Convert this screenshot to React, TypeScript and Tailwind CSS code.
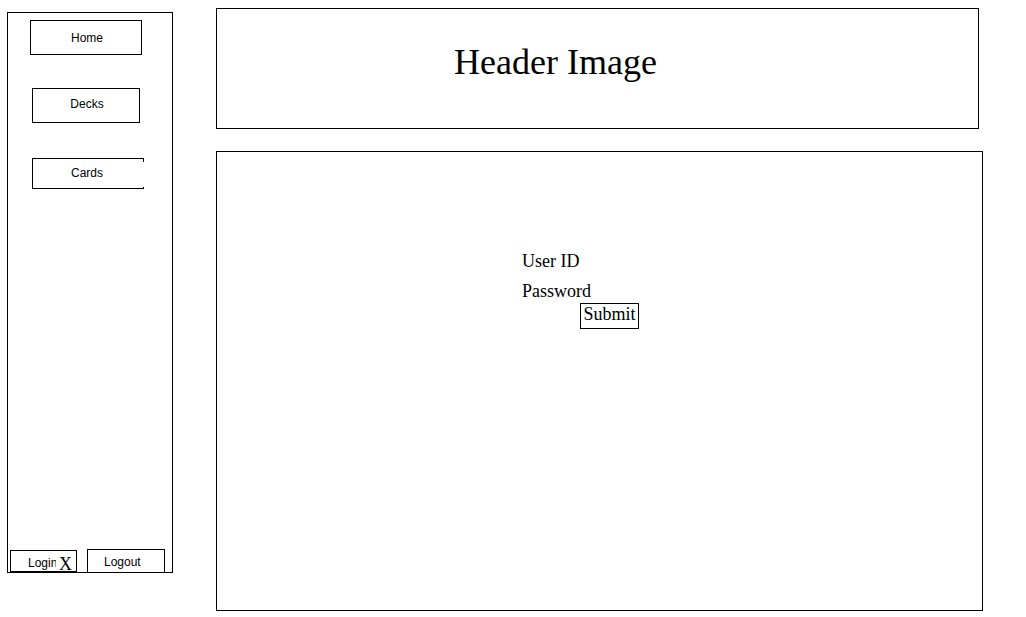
import React from "react";

const navButton =
  "relative flex h-[35px] items-center justify-center border border-black font-['Liberation_Sans',sans-serif] text-xs";

function Sidebar() {
  return (
    <aside className="flex min-h-[561px] w-[166px] shrink-0 flex-col justify-between border border-black">
      <nav className="flex flex-col items-start pt-[7px]">
        <button type="button" className={`${navButton} ml-[22px] w-[112px] pl-0.5`}>
          Home
        </button>
        <button type="button" className={`${navButton} mt-[33px] ml-6 w-[108px] pb-1 pl-0.5`}>
          Decks
        </button>
        <button
          type="button"
          className="relative mt-[35px] ml-6 flex h-[31px] w-[112px] items-center justify-center border border-black pr-0.5 pb-0.5 font-['Liberation_Sans',sans-serif] text-xs"
        >
          Cards
          <span className="absolute top-[3px] -right-px bottom-px w-px bg-white" />
        </button>
      </nav>
      <div className="flex items-end gap-2.5 pl-0.5">
        <button
          type="button"
          className="relative flex h-[22px] w-[67px] items-center border border-black pt-1 pl-[17px] font-['Liberation_Sans',sans-serif] text-xs"
        >
          Login
          <span className="absolute top-[3px] right-px bottom-0 w-[19px] bg-white text-center font-['Liberation_Serif',serif] text-lg leading-5">
            X
          </span>
        </button>
        <button
          type="button"
          className="flex h-[23px] w-[78px] items-center border border-b-0 border-black pt-0.5 pl-4 font-['Liberation_Sans',sans-serif] text-xs"
        >
          Logout
        </button>
      </div>
    </aside>
  );
}

function LoginForm() {
  return (
    <form
      className="mx-auto w-[155px] text-lg leading-6"
      onSubmit={(event) => event.preventDefault()}
    >
      <div className="mb-1.5 flex gap-2">
        <label htmlFor="user-id" className="whitespace-nowrap">
          User ID
        </label>
        <input id="user-id" type="text" className="h-6 min-w-0 flex-1 outline-none" />
      </div>
      <div className="flex gap-2">
        <label htmlFor="password">Password</label>
        <input id="password" type="password" className="h-6 min-w-0 flex-1 outline-none" />
      </div>
      <button
        type="submit"
        className="ml-[58px] block h-[26px] w-[59px] border border-black pb-1 text-center leading-5"
      >
        Submit
      </button>
    </form>
  );
}

export default function App() {
  return (
    <div className="flex items-start gap-[43px] bg-white pt-2 pr-[43px] pb-1.5 pl-[7px] font-['Liberation_Serif',serif] text-black">
      <div className="pt-1">
        <Sidebar />
      </div>
      <div className="flex min-w-0 flex-1 flex-col gap-[22px]">
        <header className="mr-1 min-h-[121px] border border-black pt-[33px] pr-[84px] text-center">
          <h1 className="text-4xl leading-10">Header Image</h1>
        </header>
        <main className="min-h-[460px] border border-black pt-[97px]">
          <LoginForm />
        </main>
      </div>
    </div>
  );
}
